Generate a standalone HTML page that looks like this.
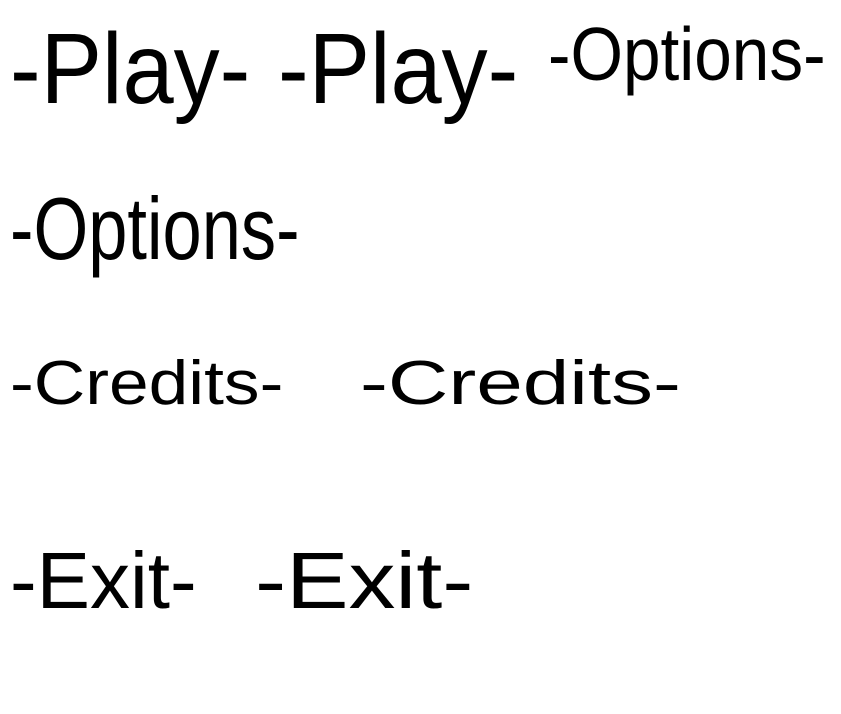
<!DOCTYPE html>
<html><head><meta charset="utf-8"><style>
html,body{margin:0;padding:0;background:#fff;width:841px;height:714px;overflow:hidden}
.t{position:absolute;font-family:"Liberation Sans",sans-serif;color:#000;line-height:1;white-space:nowrap;transform-origin:0 0;font-weight:normal}
</style></head><body>
<div class="t" style="left:10px;top:19px;font-size:100px;transform:scaleX(0.92)">-Play-</div>
<div class="t" style="left:278px;top:19px;font-size:100px;transform:scaleX(0.92)">-Play-</div>
<div class="t" style="left:548px;top:17px;font-size:75px;transform:scaleX(0.9)">-Options-</div>
<div class="t" style="left:10px;top:185px;font-size:88px;transform:scaleX(0.8)">-Options-</div>
<div class="t" style="left:10px;top:353px;font-size:62px;transform:scaleX(1.15)">-Credits-</div>
<div class="t" style="left:360px;top:353px;font-size:62px;transform:scaleX(1.35)">-Credits-</div>
<div class="t" style="left:10px;top:541px;font-size:80px;transform:scaleX(1.0)">-Exit-</div>
<div class="t" style="left:255px;top:541px;font-size:80px;transform:scaleX(1.17)">-Exit-</div>
</body></html>
